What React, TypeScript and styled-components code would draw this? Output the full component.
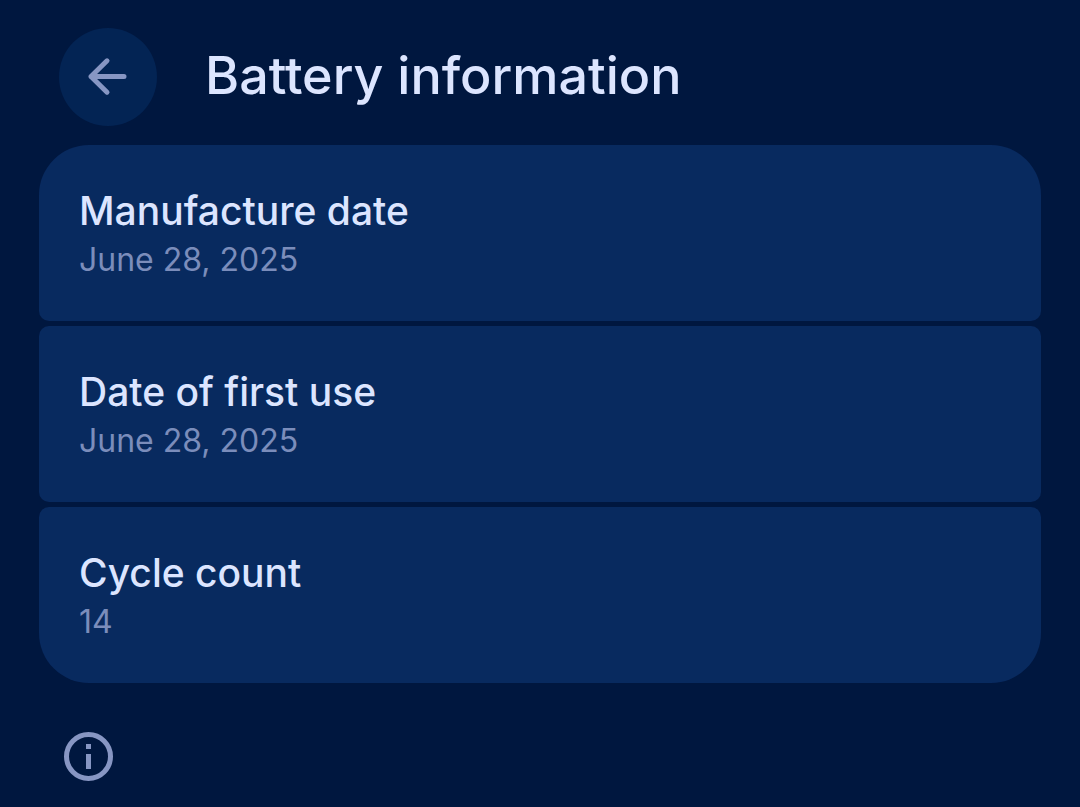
import React from "react";
import styled, { createGlobalStyle } from "styled-components";

const GlobalStyle = createGlobalStyle`
  * { box-sizing: border-box; }
  body {
    margin: 0;
    background: #00173f;
    color: #dce5ff;
    font-family: Inter, "Open Sans", sans-serif;
  }
`;

const Page = styled.main`
  padding: 28px 39px 24px;
`;

const Header = styled.header`
  display: flex;
  align-items: center;
  gap: 48px;
  padding: 0 20px;
  margin-bottom: 19px;
`;

const BackButton = styled.button`
  display: grid;
  place-items: center;
  flex: none;
  width: 98px;
  height: 98px;
  padding: 0;
  border: 0;
  border-radius: 50%;
  background: #032454;
  color: #8796c3;
  cursor: pointer;
`;

const Title = styled.h1`
  margin: 0;
  padding-bottom: 2px;
  font-size: 52px;
  line-height: 64px;
  font-weight: 500;
`;

const List = styled.dl`
  display: flex;
  flex-direction: column;
  gap: 5px;
  margin: 0;
  border-radius: 50px;
  overflow: hidden;
`;

const Item = styled.div`
  padding: 41px 40px 37px;
  border-radius: 10px;
  background: #082a5f;
`;

const Label = styled.dt`
  font-size: 39px;
  line-height: 50px;
  font-weight: 500;
`;

const Value = styled.dd`
  margin: 0;
  font-size: 32px;
  line-height: 48px;
  color: #7b8dbb;
`;

const Footer = styled.footer`
  padding: 48px 24px 0;
  color: #8796c3;
`;

const rows = [
  { label: "Manufacture date", value: "June 28, 2025" },
  { label: "Date of first use", value: "June 28, 2025" },
  { label: "Cycle count", value: "14" },
];

export default function App() {
  return (
    <Page>
      <GlobalStyle />
      <Header>
        <BackButton type="button" aria-label="Back">
          <svg width="42" height="42" viewBox="0 0 42 42" fill="none" stroke="currentColor" strokeWidth="5" strokeLinecap="round" strokeLinejoin="round" aria-hidden="true">
            <path d="M37 20.5H4M20 4.8L4 20.5l16 15.7" />
          </svg>
        </BackButton>
        <Title>Battery information</Title>
      </Header>
      <List>
        {rows.map((row) => (
          <Item key={row.label}>
            <Label>{row.label}</Label>
            <Value>{row.value}</Value>
          </Item>
        ))}
      </List>
      <Footer>
        <svg width="52" height="52" viewBox="0 0 52 52" fill="none" stroke="currentColor" strokeWidth="5" role="img" aria-label="Information">
          <circle cx="25.5" cy="25.5" r="22" />
          <path d="M25.5 23v15M25.5 13v5" />
        </svg>
      </Footer>
    </Page>
  );
}
